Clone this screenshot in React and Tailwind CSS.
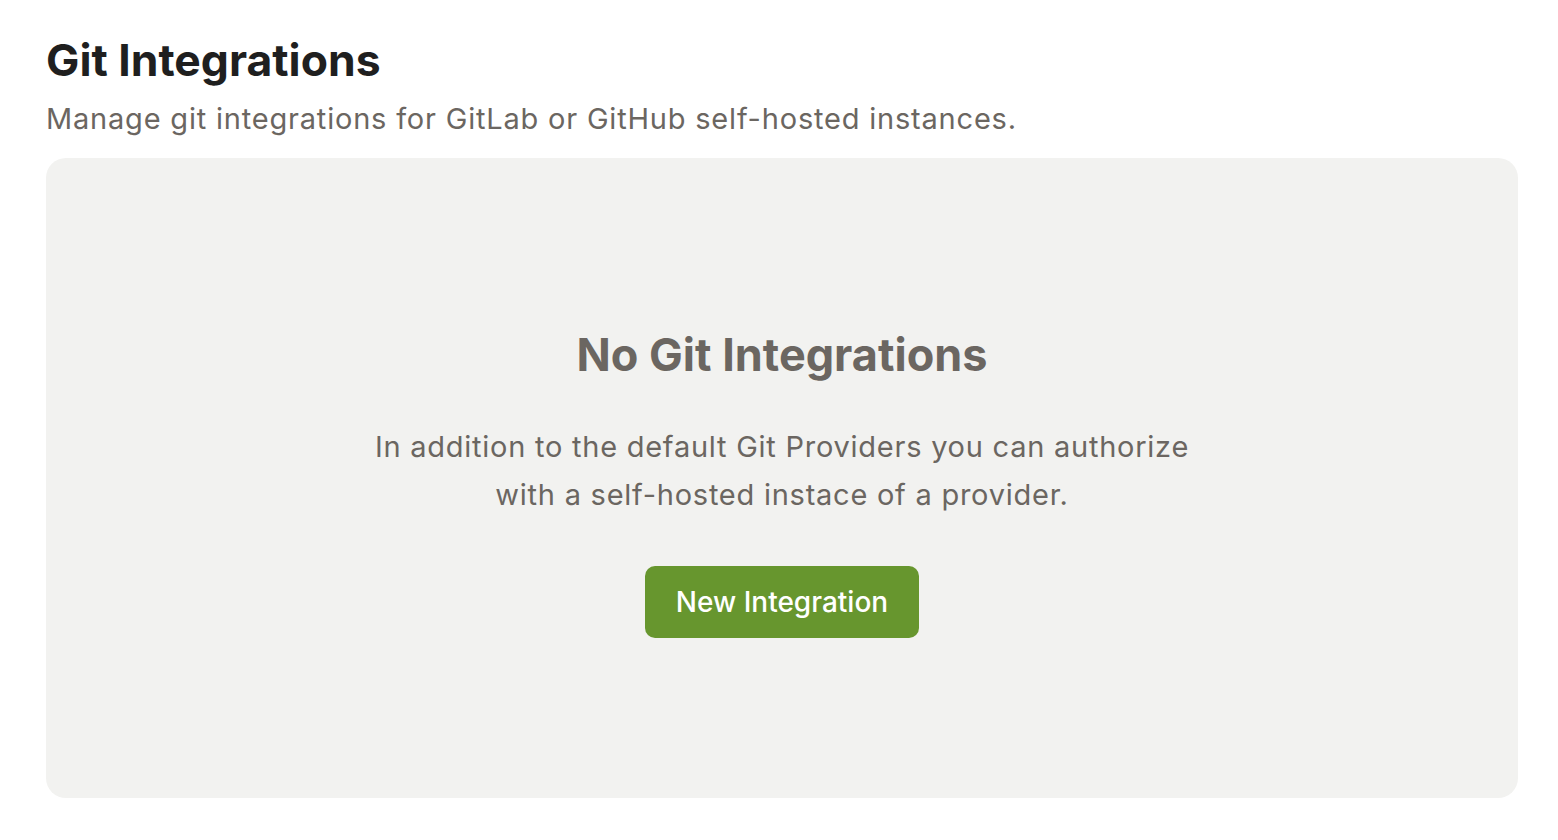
export default function App() {
  return (
    <div className="min-h-screen bg-white px-[46px] pt-[32px]" style={{ fontFamily: "Inter, 'Noto Sans', sans-serif" }}>
      <h1 className="text-[44.5px] leading-[56px] font-bold text-[#1f1f1f]">Git Integrations</h1>
      <p className="mt-[9px] text-[29px] leading-[44px] tracking-[0.8px] text-[#6b6661]">Manage git integrations for GitLab or GitHub self-hosted instances.</p>
      <div className="mt-[17px] w-[1472px] h-[640px] rounded-[20px] bg-[#f2f2f0] flex flex-col items-center pt-[167px]">
        <h2 className="text-[45px] leading-[60px] font-bold text-[#6b6661]">No Git Integrations</h2>
        <p className="mt-[38px] text-center text-[29px] leading-[48px] tracking-[0.75px] text-[#6b6661]">
          In addition to the default Git Providers you can authorize<br />with a self-hosted instace of a provider.
        </p>
        <button className="mt-[47px] w-[274px] h-[72px] rounded-[10px] bg-[#67962e] text-white text-[28px] font-medium">New Integration</button>
      </div>
    </div>
  );
}
